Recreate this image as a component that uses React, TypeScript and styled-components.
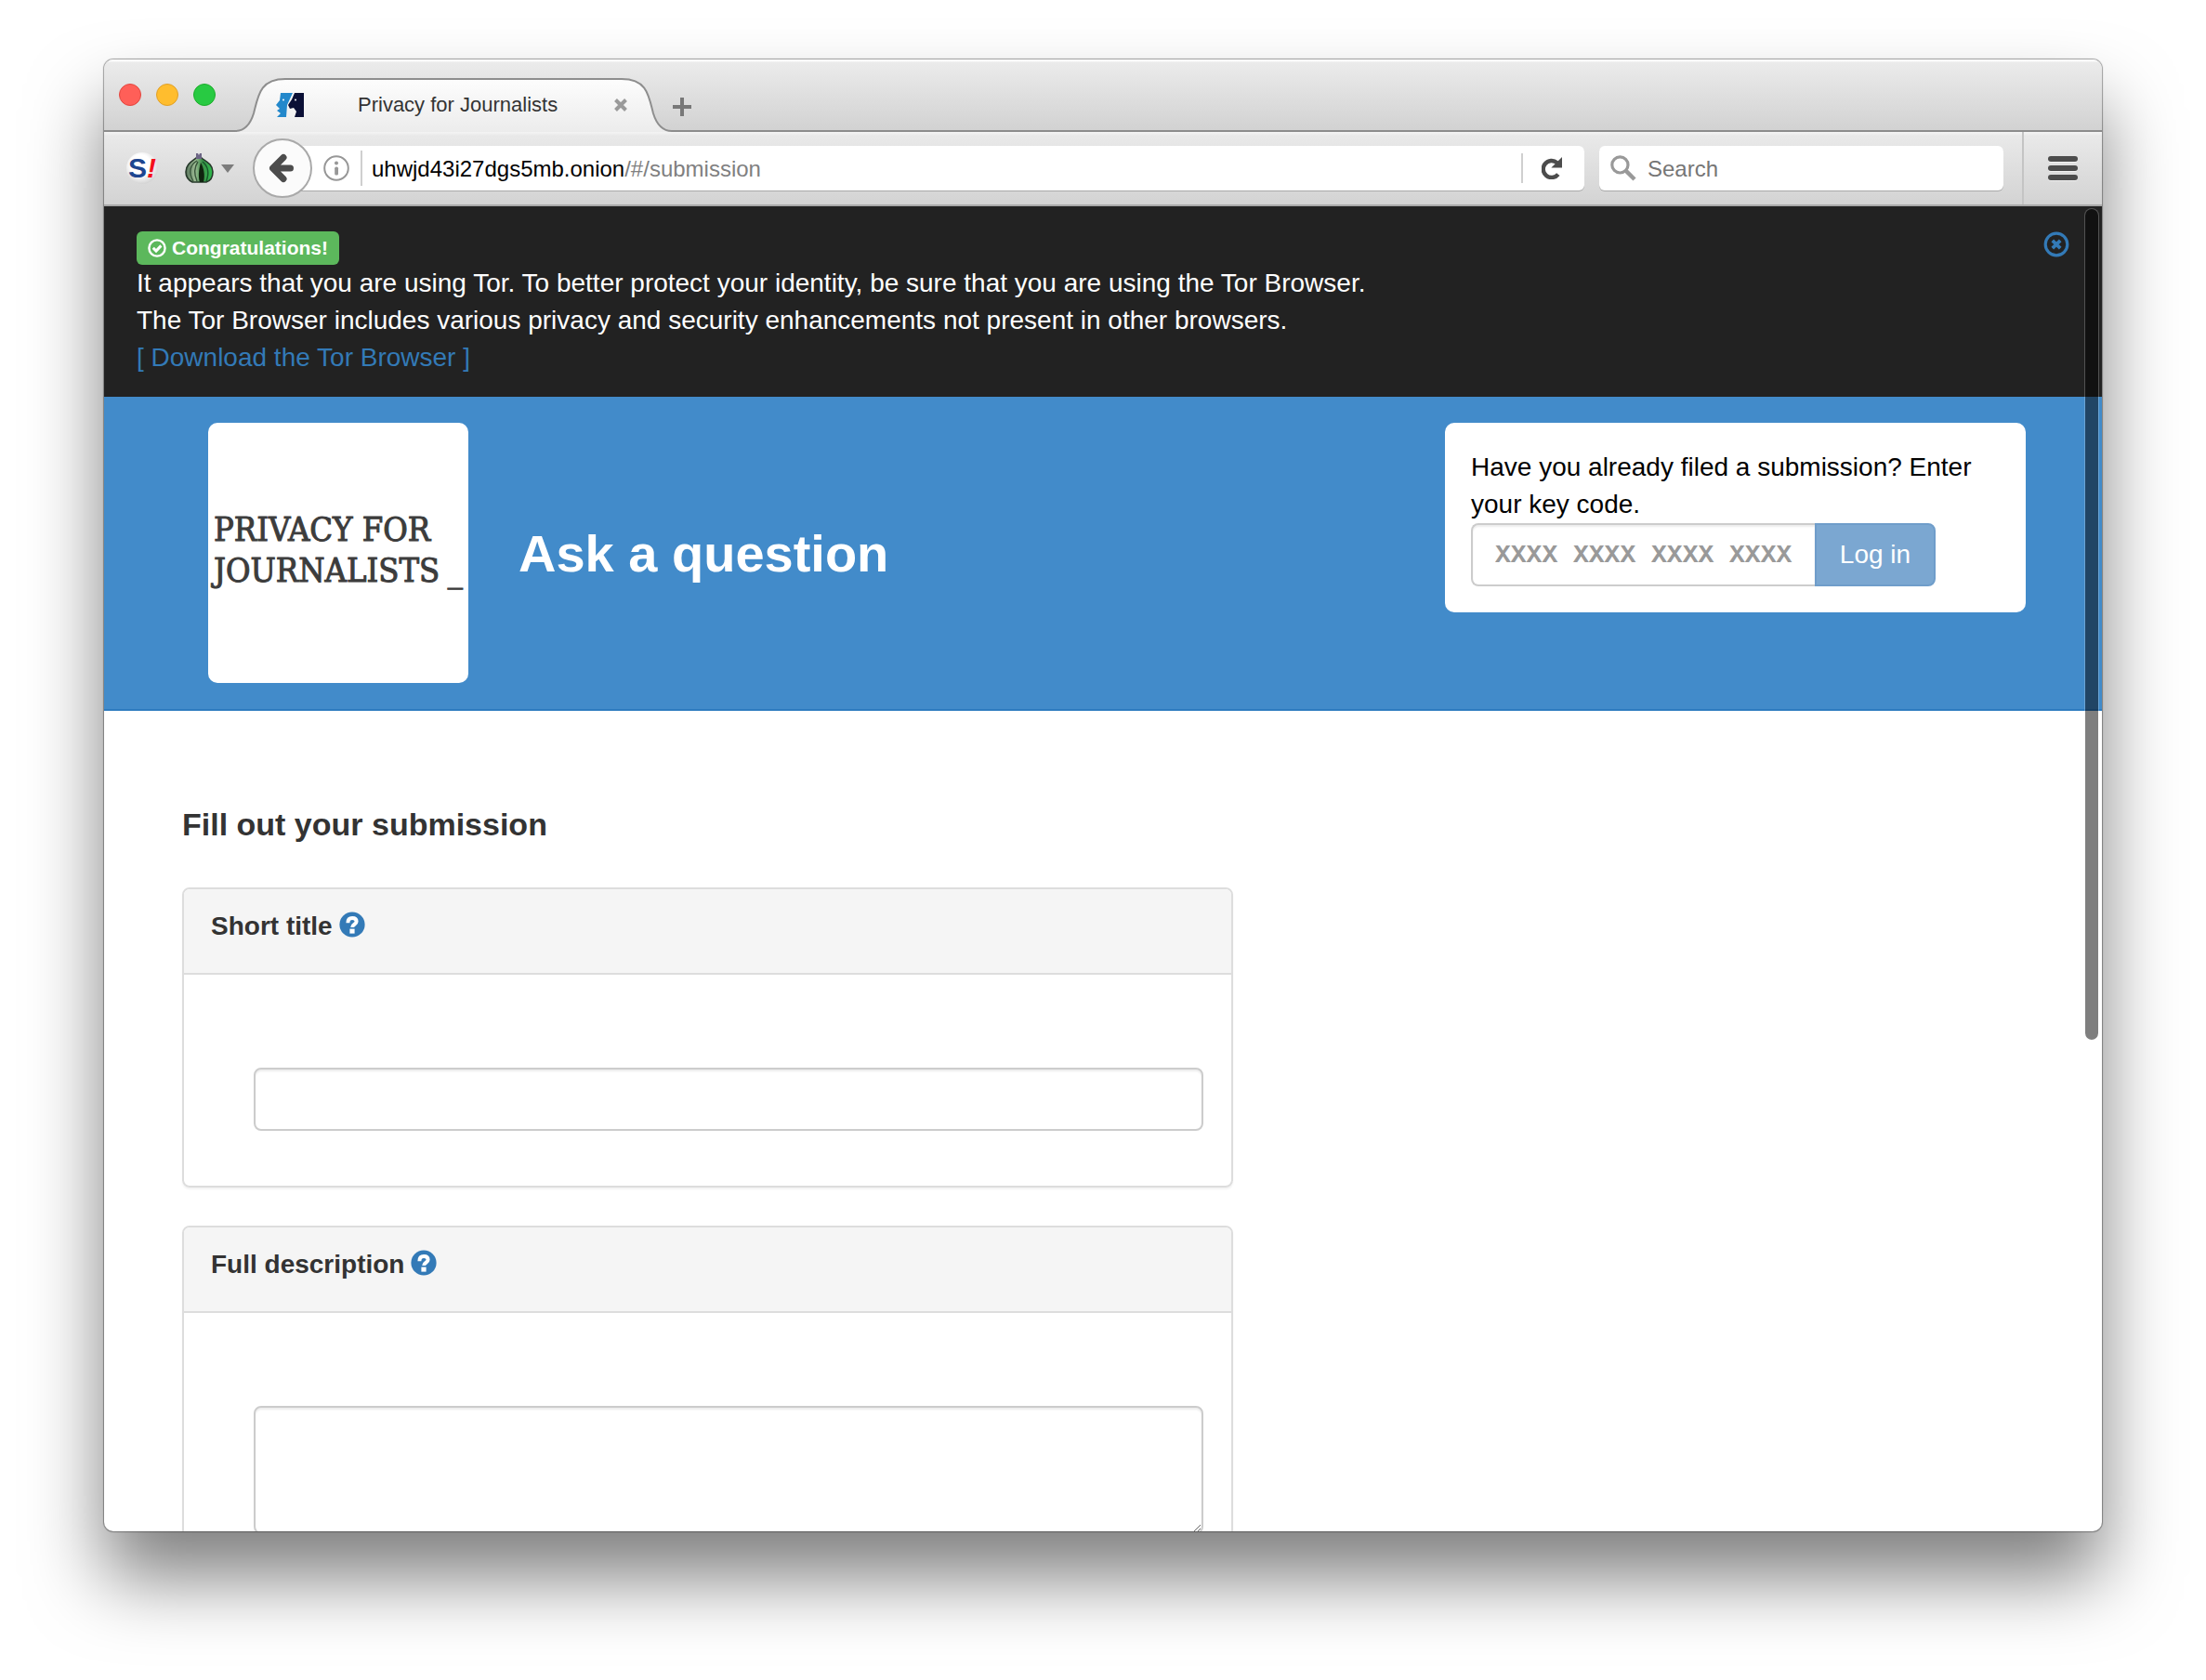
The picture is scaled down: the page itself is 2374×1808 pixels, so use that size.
import React, { useState } from "react";
import styled, { createGlobalStyle } from "styled-components";

const sans = `"Liberation Sans", Arial, Helvetica, sans-serif`;
const mono = `"Liberation Mono", "Courier New", monospace`;

const GlobalStyle = createGlobalStyle`
  *, *::before, *::after { box-sizing: border-box; }
  body {
    margin: 0;
    background: #fff;
    color: #333;
    font-family: ${sans};
    font-size: 28px;
    line-height: 40px;
  }
  button, input, textarea { font: inherit; }
`;

const Desktop = styled.div`
  display: flex;
  height: 100vh;
  padding: 64px 112px 160px;
`;

const Window = styled.div`
  flex: 1;
  min-width: 0;
  display: flex;
  flex-direction: column;
  overflow: hidden;
  border-radius: 10px;
  background: #fff;
  box-shadow: 0 0 1px 1px rgba(0, 0, 0, 0.35), 0 50px 80px rgba(0, 0, 0, 0.5);
`;

/* ---------- tab strip ---------- */

const TabStrip = styled.div`
  flex: none;
  display: flex;
  align-items: flex-end;
  height: 78px;
  padding-left: 16px;
  background: linear-gradient(#fafafa 0 2px, #ebebeb 3px, #d2d2d2 76px, #8c8c8c 76px);
`;

const Lights = styled.div`
  display: flex;
  gap: 16px;
  align-self: flex-start;
  padding: 26px 21px 0 0;
`;

const Light = styled.button<{ $fill: string; $edge: string }>`
  width: 24px;
  height: 24px;
  padding: 0;
  border: 1px solid ${(p) => p.$edge};
  border-radius: 50%;
  background: ${(p) => p.$fill};
`;

const Tab = styled.div`
  position: relative;
  display: flex;
  align-items: center;
  width: 470px;
  height: 58px;
  padding: 0 47px 0 44px;
`;

const TabShape = styled.svg`
  position: absolute;
  inset: 0;
`;

const TabIcon = styled.svg`
  position: relative;
  flex: none;
  margin-right: 58px;
`;

const TabTitle = styled.span`
  position: relative;
  flex: 1;
  color: #333;
  font-size: 22px;
  line-height: 26px;
  white-space: nowrap;
`;

const GlyphButton = styled.button`
  position: relative;
  flex: none;
  display: flex;
  align-items: center;
  justify-content: center;
  padding: 0;
  border: 0;
  background: none;
  color: inherit;
`;

const NewTab = styled(GlyphButton)`
  width: 22px;
  height: 54px;
  align-self: flex-end;
`;

/* ---------- toolbar ---------- */

const Toolbar = styled.div`
  flex: none;
  display: flex;
  align-items: center;
  height: 80px;
  padding-left: 24px;
  border-bottom: 2px solid #a9a9a9;
  background: linear-gradient(#f4f4f4 0, #e9e9e9 4px, #d3d3d3 100%);
`;

const ScriptButton = styled.button`
  display: flex;
  align-items: center;
  justify-content: center;
  width: 34px;
  height: 34px;
  margin-right: 29px;
  padding: 0;
  border: 0;
  border-radius: 50%;
  background: radial-gradient(circle at 45% 40%, #fff 40%, #b4b4b4 100%);
  color: #1d4690;
  font-size: 30px;
  font-weight: bold;
  line-height: 34px;
`;

const Bang = styled.em`
  color: #f3101c;
`;

const OnionButton = styled(GlyphButton)`
  gap: 8px;
  margin-right: 20px;
`;

const BackButton = styled.button`
  position: relative;
  z-index: 1;
  flex: none;
  display: flex;
  align-items: center;
  justify-content: center;
  width: 64px;
  height: 64px;
  margin-right: -16px;
  padding: 0;
  border: 2px solid #a9a9a9;
  border-radius: 50%;
  background: #fbfbfb;
`;

const Field = styled.label`
  display: flex;
  align-items: center;
  height: 48px;
  border-radius: 6px;
  background: #fff;
  box-shadow: 0 1px 0 #a9a9a9;
  font-size: 24px;
  line-height: 30px;
`;

const AddressField = styled(Field)`
  flex: 1;
  min-width: 0;
  margin-right: 16px;
  padding-left: 28px;
  border-radius: 0 6px 6px 0;
`;

const SearchField = styled(Field)`
  flex: 0 1 435px;
  gap: 12px;
  margin-right: 20px;
  padding-left: 12px;
`;

const FieldRule = styled.span<{ $tall?: boolean }>`
  flex: none;
  width: 2px;
  height: ${(p) => (p.$tall ? 38 : 32)}px;
  background: #cfcfcf;
`;

const Address = styled.a`
  flex: 1;
  padding: 2px 0 0 10px;
  color: #808080;
  text-decoration: none;
  white-space: nowrap;
`;

const Host = styled.span`
  color: #000;
`;

const InfoIcon = styled.svg`
  flex: none;
  margin-right: 12px;
`;

const ReloadButton = styled(GlyphButton)`
  width: 66px;
  height: 48px;
  padding-right: 4px;
`;

const SearchInput = styled.input`
  flex: 1;
  min-width: 0;
  padding: 2px 0 0;
  border: 0;
  outline: 0;
  background: none;
  &::placeholder {
    color: #767676;
    opacity: 1;
  }
`;

const MenuButton = styled.button`
  flex: none;
  display: flex;
  flex-direction: column;
  align-items: center;
  justify-content: center;
  gap: 4px;
  width: 86px;
  height: 78px;
  padding: 0;
  border: 0;
  border-left: 2px solid #c4c4c4;
  background: none;
`;

const MenuBar = styled.span`
  width: 32px;
  height: 6px;
  border-radius: 3px;
  background: #4c4c4c;
  box-shadow: 0 1px 0 rgba(255, 255, 255, 0.6);
`;

/* ---------- page ---------- */

const Page = styled.div`
  position: relative;
  flex: 1;
  min-height: 0;
  overflow: hidden;
`;

const ScrollThumb = styled.div`
  position: absolute;
  top: 2px;
  right: 3px;
  width: 16px;
  height: 896px;
  border: 1px solid rgba(255, 255, 255, 0.22);
  border-radius: 8px;
  background: rgba(0, 0, 0, 0.5);
  background-clip: padding-box;
`;

const Notice = styled.section`
  display: flex;
  align-items: flex-start;
  justify-content: space-between;
  padding: 27px 35px 22px;
  background: #222;
  color: #fff;
`;

const Badge = styled.strong`
  display: flex;
  align-items: center;
  gap: 6px;
  width: max-content;
  height: 36px;
  padding: 0 12px;
  border-radius: 6px;
  background: #5cb85c;
  font-size: 21px;
  line-height: 36px;
`;

const NoticeText = styled.p`
  margin: 0;
`;

const NoticeLink = styled.a`
  color: #337ab7;
  text-decoration: none;
`;

const Dismiss = styled(GlyphButton)`
  width: 28px;
  height: 28px;
`;

const Header = styled.header`
  display: flex;
  align-items: flex-start;
  padding: 28px 82px 28px 112px;
  border-bottom: 2px solid #2e7bbf;
  background: #428bca;
`;

const Logo = styled.a`
  flex: none;
  display: flex;
  flex-direction: column;
  justify-content: center;
  width: 280px;
  height: 280px;
  margin-right: 54px;
  padding: 0 6px 6px;
  border-radius: 10px;
  background: #fff;
  color: #3c3c3c;
  font-family: "DejaVu Serif Condensed", "DejaVu Serif", serif;
  font-size: 36px;
  line-height: 44px;
  text-decoration: none;
  white-space: nowrap;
  -webkit-text-stroke: 1px #3c3c3c;
`;

const LogoLine = styled.span`
  display: flex;
  justify-content: space-between;
`;

const Heading = styled.h1`
  flex: 1;
  align-self: center;
  margin: 0;
  padding-top: 2px;
  color: #fff;
  font-size: 56px;
  line-height: 64px;
`;

const LoginCard = styled.form`
  flex: 0 1 625px;
  padding: 28px;
  border-radius: 10px;
  background: #fff;
  color: #000;
`;

const LoginLabel = styled.label`
  display: block;
`;

const LoginRow = styled.div`
  display: flex;
`;

const KeyInput = styled.input`
  width: 370px;
  height: 68px;
  padding: 0 24px;
  border: 2px solid #ccc;
  border-right: 0;
  border-radius: 8px 0 0 8px;
  box-shadow: inset 0 2px 2px rgba(0, 0, 0, 0.075);
  font-family: ${mono};
  font-weight: bold;
  &::placeholder {
    color: #999;
    opacity: 1;
  }
`;

const LoginButton = styled.button`
  width: 130px;
  height: 68px;
  padding: 0;
  border: 2px solid #6f9dca;
  border-radius: 0 8px 8px 0;
  background: #7ba7d1;
  color: #fff;
`;

const Main = styled.main`
  display: grid;
  grid-template-columns: repeat(12, 1fr);
  column-gap: 60px;
  padding: 102px 84px 0;
`;

const Form = styled.form`
  grid-column: span 7;
`;

const FormTitle = styled.h2`
  margin: 0 0 48px;
  font-size: 34px;
  line-height: 40px;
`;

const Panel = styled.section`
  margin-bottom: 41px;
  border: 2px solid #ddd;
  border-radius: 8px;
  box-shadow: 0 2px 2px rgba(0, 0, 0, 0.05);
`;

const PanelHead = styled.div`
  display: flex;
  align-items: flex-start;
  gap: 7px;
  padding: 20px 29px 30px;
  border-bottom: 2px solid #ddd;
  border-radius: 6px 6px 0 0;
  background: #f5f5f5;
`;

const PanelLabel = styled.label`
  font-weight: bold;
`;

const HelpGlyph = styled.svg`
  flex: none;
  margin-top: 4px;
`;

const PanelBody = styled.div`
  display: flex;
  padding: 100px 30px 59px 75px;
`;

const TextInput = styled.input`
  flex: 1;
  min-width: 0;
  height: 68px;
  padding: 12px 24px;
  border: 2px solid #ccc;
  border-radius: 8px;
  background: #fff;
  box-shadow: inset 0 2px 2px rgba(0, 0, 0, 0.075);
`;

const TextArea = styled(TextInput).attrs({ as: "textarea" })`
  height: 138px;
  resize: vertical;
`;

/* ---------- drawings ---------- */

const HelpIcon = () => (
  <HelpGlyph width="28" height="28" viewBox="0 0 28 28" aria-hidden="true">
    <circle cx="14" cy="14" r="13.6" fill="#337ab7" />
    <path d="M9.4 12.2c0-3.8 2-5.2 4.7-5.2 2.6 0 4.5 1.3 4.5 3.7 0 3.3-4.4 2.8-4.4 6.3" fill="none" stroke="#fff" strokeWidth="4" />
    <rect x="11.4" y="18.6" width="5.2" height="5" fill="#fff" />
  </HelpGlyph>
);

const Favicon = () => (
  <TabIcon width="30" height="26" viewBox="0 0 30 26" aria-hidden="true">
    <path d="M5 0H18L12 13L11 26H1L5 22L1 19L4 17L0 13L4 8Z" fill="#2388cb" />
    <path d="M20 0H30V26H20L22 20L19 16L15 17L13 13L17 7Z" fill="#0b1036" />
    <circle cx="8" cy="7.5" r="1" fill="#fff" />
    <circle cx="21" cy="7.5" r="1" fill="#fff" />
  </TabIcon>
);

const Onion = () => (
  <svg width="31" height="32" viewBox="0 0 31 32" aria-hidden="true">
    <defs>
      <linearGradient id="onion" x1="0" x2="1">
        <stop offset="0" stopColor="#56735a" />
        <stop offset=".35" stopColor="#9dbb94" />
        <stop offset=".6" stopColor="#3d8f49" />
        <stop offset="1" stopColor="#2dbb4c" />
      </linearGradient>
    </defs>
    <path d="M12 5H18C21 8 30 11 30 20C30 27 26 30 23 31H8C4 29 1 26 1 20C1 11 9 8 12 5Z" fill="url(#onion)" stroke="#26382a" strokeWidth="1.6" />
    <path d="M12 0H14L15 2L16 0H18V6H12Z" fill="#6c6585" />
    <path d="M13 8C6 12 3 20 9 30" fill="none" stroke="#38553b" strokeWidth="1.4" />
    <path d="M14 9C10 15 10 23 13 30" fill="none" stroke="#38553b" strokeWidth="1.4" />
    <path d="M17 10C15 17 14 25 16 31H20C22 23 20 15 17 10Z" fill="#10240f" />
    <path d="M19 9C25 14 26 22 23 30" fill="none" stroke="#17562a" strokeWidth="1.4" />
  </svg>
);

export default function App() {
  const [noticeOpen, setNoticeOpen] = useState(true);
  return (
    <>
      <GlobalStyle />
      <Desktop>
        <Window>
          <TabStrip>
            <Lights>
              <Light $fill="#ff5f58" $edge="#e2463f" aria-label="Close window" />
              <Light $fill="#ffbd2e" $edge="#e0a028" aria-label="Minimize window" />
              <Light $fill="#28ca42" $edge="#1dad2b" aria-label="Zoom window" />
            </Lights>
            <Tab>
              <TabShape width="470" height="58" viewBox="0 0 470 58" aria-hidden="true">
                <defs>
                  <linearGradient id="tab" x1="0" x2="0" y1="0" y2="1">
                    <stop offset="0" stopColor="#fdfdfd" />
                    <stop offset="1" stopColor="#ececec" />
                  </linearGradient>
                </defs>
                <path d="M0 57C9 57 16 51 20 38C25 18 27 1 54 1H416C443 1 445 18 450 38C454 51 461 57 470 57V58H0Z" fill="url(#tab)" />
                <path d="M0 57C9 57 16 51 20 38C25 18 27 1 54 1H416C443 1 445 18 450 38C454 51 461 57 470 57" fill="none" stroke="#8e8e8e" strokeWidth="2" />
              </TabShape>
              <Favicon />
              <TabTitle>Privacy for Journalists</TabTitle>
              <GlyphButton aria-label="Close tab">
                <svg width="16" height="16" viewBox="0 0 16 16">
                  <path d="M2.5 2.5L13.5 13.5M13.5 2.5L2.5 13.5" stroke="#9a9a9a" strokeWidth="4" />
                </svg>
              </GlyphButton>
            </Tab>
            <NewTab aria-label="New tab">
              <svg width="20" height="20" viewBox="0 0 20 20">
                <path d="M10 0V20M0 10H20" stroke="#787878" strokeWidth="4" />
              </svg>
            </NewTab>
          </TabStrip>

          <Toolbar>
            <ScriptButton aria-label="Script blocker">
              <span>S</span>
              <Bang>!</Bang>
            </ScriptButton>
            <OnionButton aria-label="Onion menu">
              <Onion />
              <svg width="14" height="9" viewBox="0 0 14 9">
                <path d="M0 0H14L7 9Z" fill="#7c7c7c" />
              </svg>
            </OnionButton>
            <BackButton aria-label="Back">
              <svg width="28" height="32" viewBox="0 0 28 32">
                <path d="M15 4.5L3.5 16L15 27.5M4.5 16H22.5" fill="none" stroke="#4c4c4c" strokeWidth="7" strokeLinecap="round" strokeLinejoin="round" />
              </svg>
            </BackButton>
            <AddressField as="div">
              <InfoIcon width="28" height="28" viewBox="0 0 28 28" aria-hidden="true">
                <circle cx="14" cy="14" r="12.8" fill="none" stroke="#979797" strokeWidth="2" />
                <circle cx="14" cy="8.4" r="2" fill="#979797" />
                <rect x="12.2" y="12.6" width="3.8" height="9" rx="1.6" fill="#979797" />
              </InfoIcon>
              <FieldRule $tall />
              <Address href="#/submission">
                <Host>uhwjd43i27dgs5mb.onion</Host>/#/submission
              </Address>
              <FieldRule />
              <ReloadButton aria-label="Reload">
                <svg width="22" height="24" viewBox="0 0 22 24">
                  <path d="M17.8 18.6A9 9 0 1 1 16.6 6.2" fill="none" stroke="#4c4c4c" strokeWidth="4.4" />
                  <path d="M22 0V11.6H10.4Z" fill="#4c4c4c" />
                </svg>
              </ReloadButton>
            </AddressField>
            <SearchField>
              <svg width="28" height="28" viewBox="0 0 28 28" aria-hidden="true">
                <circle cx="10.4" cy="10.4" r="8.6" fill="none" stroke="#999" strokeWidth="3.2" />
                <path d="M16.6 16.6L26 26" stroke="#999" strokeWidth="4.4" />
              </svg>
              <SearchInput placeholder="Search" aria-label="Search" />
            </SearchField>
            <MenuButton aria-label="Open menu">
              <MenuBar />
              <MenuBar />
              <MenuBar />
            </MenuButton>
          </Toolbar>

          <Page>
            {noticeOpen && (
              <Notice>
                <div>
                  <Badge>
                    <svg width="20" height="20" viewBox="0 0 20 20" aria-hidden="true">
                      <circle cx="10" cy="10" r="8.6" fill="none" stroke="#fff" strokeWidth="2.4" />
                      <path d="M5.8 9.8L9 13L14.4 7.4" fill="none" stroke="#fff" strokeWidth="3" />
                    </svg>
                    Congratulations!
                  </Badge>
                  <NoticeText>
                    It appears that you are using Tor. To better protect your identity, be sure that you are using the Tor Browser.
                    <br />
                    The Tor Browser includes various privacy and security enhancements not present in other browsers.
                    <br />
                    <NoticeLink href="#download">[ Download the Tor Browser ]</NoticeLink>
                  </NoticeText>
                </div>
                <Dismiss aria-label="Dismiss" onClick={() => setNoticeOpen(false)}>
                  <svg width="28" height="28" viewBox="0 0 28 28">
                    <circle cx="14" cy="14" r="11.8" fill="none" stroke="#337ab7" strokeWidth="3.2" />
                    <path d="M9.8 9.8L18.2 18.2M18.2 9.8L9.8 18.2" stroke="#337ab7" strokeWidth="3.8" />
                  </svg>
                </Dismiss>
              </Notice>
            )}

            <Header>
              <Logo href="#/">
                <LogoLine>PRIVACY FOR</LogoLine>
                <LogoLine>
                  <span>JOURNALISTS</span>
                  <span>_</span>
                </LogoLine>
              </Logo>
              <Heading>Ask a question</Heading>
              <LoginCard onSubmit={(e) => e.preventDefault()}>
                <LoginLabel htmlFor="key">Have you already filed a submission? Enter your key code.</LoginLabel>
                <LoginRow>
                  <KeyInput id="key" placeholder="XXXX XXXX XXXX XXXX" />
                  <LoginButton>Log in</LoginButton>
                </LoginRow>
              </LoginCard>
            </Header>

            <Main>
              <Form>
                <FormTitle>Fill out your submission</FormTitle>
                <Panel>
                  <PanelHead>
                    <PanelLabel htmlFor="title">Short title</PanelLabel>
                    <HelpIcon />
                  </PanelHead>
                  <PanelBody>
                    <TextInput id="title" />
                  </PanelBody>
                </Panel>
                <Panel>
                  <PanelHead>
                    <PanelLabel htmlFor="description">Full description</PanelLabel>
                    <HelpIcon />
                  </PanelHead>
                  <PanelBody>
                    <TextArea id="description" />
                  </PanelBody>
                </Panel>
              </Form>
            </Main>
            <ScrollThumb />
          </Page>
        </Window>
      </Desktop>
    </>
  );
}
